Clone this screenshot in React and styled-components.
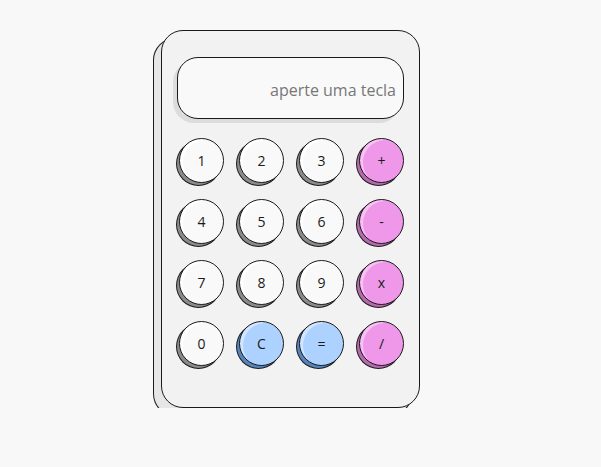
import React from "react";
import styled, { createGlobalStyle } from "styled-components";

const Global = createGlobalStyle`
  html, body { margin: 0; padding: 0; background: #f8f8f8; }
  body { font-family: "Open Sans", "Noto Sans", sans-serif; }
`;

const Page = styled.div`
  padding: 30px 0 0 161px;
`;

const Card = styled.div`
  width: 259px;
  height: 378px;
  box-sizing: border-box;
  padding: 26px 15px 0 15px;
  background: #f2f2f2;
  border: 1px solid #1a1a1a;
  border-radius: 22px;
  box-shadow: -8px 8px 0 -1px #e6e6e6, -8px 8px 0 0 #1a1a1a;
  display: flex;
  flex-direction: column;
  gap: 19px;
`;

const Display = styled.div`
  height: 62px;
  box-sizing: border-box;
  background: #f9f9f9;
  border: 1px solid #1a1a1a;
  border-radius: 21px;
  box-shadow: -4px 4px 0 0 #dcdcdc;
  display: flex;
  align-items: center;
  justify-content: flex-end;
  padding: 3px 7px 0 0;
  color: #777;
  font-size: 16px;
`;

const Grid = styled.div`
  display: grid;
  grid-template-columns: repeat(4, 45px);
  grid-auto-rows: 45px;
  column-gap: 15px;
  row-gap: 16px;
  padding-left: 2px;
`;

const palette = {
  num: { bg: "#f9f9f9", shade: "#8a8a8a", hi: "#ffffff" },
  op: { bg: "#ef98e9", shade: "#b66aae", hi: "#f6c2f1" },
  fn: { bg: "#aed2ff", shade: "#5583bb", hi: "#d2e6ff" },
};

const Key = styled.button`
  width: 45px;
  height: 45px;
  box-sizing: border-box;
  border-radius: 50%;
  border: 1px solid #1a1a1a;
  background: ${(p) => palette[p.$kind].bg};
  box-shadow: inset 4px 2px 0 -1px ${(p) => palette[p.$kind].hi},
    -3px 3px 0 -1px ${(p) => palette[p.$kind].shade},
    -3px 3px 0 0 #1a1a1a;
  font-family: "Open Sans", "Noto Sans", sans-serif;
  font-size: 14px;
  color: #1a1a1a;
  padding: 0;
  display: flex;
  align-items: center;
  justify-content: center;
  cursor: pointer;
`;

const keys = [
  ["1", "num"], ["2", "num"], ["3", "num"], ["+", "op"],
  ["4", "num"], ["5", "num"], ["6", "num"], ["-", "op"],
  ["7", "num"], ["8", "num"], ["9", "num"], ["x", "op"],
  ["0", "num"], ["C", "fn"], ["=", "fn"], ["/", "op"],
];

export default function App() {
  return (
    <>
      <Global />
      <Page>
        <Card>
          <Display>aperte uma tecla</Display>
          <Grid>
            {keys.map(([label, kind]) => (
              <Key key={label} $kind={kind}>{label}</Key>
            ))}
          </Grid>
        </Card>
      </Page>
    </>
  );
}
